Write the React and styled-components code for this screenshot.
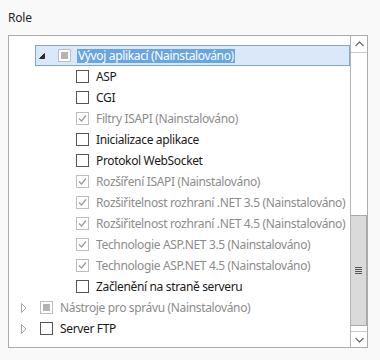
import React from "react";
import styled, { createGlobalStyle } from "styled-components";

const items = [
  { level: 1, label: "Vývoj aplikací (Nainstalováno)", state: "mixed", disabled: true, expander: "open", selected: true },
  { level: 2, label: "ASP", state: "off" },
  { level: 2, label: "CGI", state: "off" },
  { level: 2, label: "Filtry ISAPI (Nainstalováno)", state: "on", disabled: true },
  { level: 2, label: "Inicializace aplikace", state: "off" },
  { level: 2, label: "Protokol WebSocket", state: "off" },
  { level: 2, label: "Rozšíření ISAPI (Nainstalováno)", state: "on", disabled: true },
  { level: 2, label: "Rozšiřitelnost rozhraní .NET 3.5 (Nainstalováno)", state: "on", disabled: true },
  { level: 2, label: "Rozšiřitelnost rozhraní .NET 4.5 (Nainstalováno)", state: "on", disabled: true },
  { level: 2, label: "Technologie ASP.NET 3.5 (Nainstalováno)", state: "on", disabled: true },
  { level: 2, label: "Technologie ASP.NET 4.5 (Nainstalováno)", state: "on", disabled: true },
  { level: 2, label: "Začlenění na straně serveru", state: "off" },
  { level: 0, label: "Nástroje pro správu (Nainstalováno)", state: "mixed", disabled: true, expander: "closed" },
  { level: 0, label: "Server FTP", state: "off", expander: "closed" },
];

function Expander({ kind }) {
  if (kind === "open") {
    return (
      <ExpanderCell>
        <svg width="8" height="8" viewBox="0 0 8 8">
          <path d="M6.5 1.5 L6.5 6.5 L1.5 6.5 Z" fill="#2b2b2b" stroke="#2b2b2b" strokeWidth="1" />
        </svg>
      </ExpanderCell>
    );
  }
  if (kind === "closed") {
    return (
      <ExpanderCell>
        <svg width="8" height="10" viewBox="0 0 8 10">
          <path d="M1.5 0.5 L6 5 L1.5 9.5 Z" fill="none" stroke="#a6a6a6" strokeWidth="1" />
        </svg>
      </ExpanderCell>
    );
  }
  return <ExpanderCell />;
}

function Check({ state, disabled }) {
  return (
    <Box $disabled={disabled}>
      {state === "on" && (
        <svg width="11" height="11" viewBox="0 0 11 11">
          <path d="M2 5.5 L4.5 8 L9 2.5" fill="none" stroke="#9c9c9c" strokeWidth="1.3" />
        </svg>
      )}
      {state === "mixed" && <Mixed />}
    </Box>
  );
}

export default function App() {
  return (
    <>
      <GlobalStyle />
      <Page>
        <Title>Role</Title>
        <Panel>
          <List>
            {items.map((it) => (
              <Row key={it.label} $level={it.level} $selected={it.selected}>
                <Expander kind={it.expander} />
                <Check state={it.state} disabled={it.disabled} />
                <Label $disabled={it.disabled && !it.selected} $selected={it.selected}>
                  {it.label}
                </Label>
              </Row>
            ))}
          </List>
          <Scrollbar>
            <ScrollButton $top>
              <svg width="9" height="6" viewBox="0 0 9 6">
                <path d="M0.5 5 L4.5 1 L8.5 5" fill="none" stroke="#606060" strokeWidth="1.1" />
              </svg>
            </ScrollButton>
            <Track>
              <Thumb>
                <svg width="7" height="7" viewBox="0 0 7 7">
                  <rect x="0" y="0" width="7" height="1" fill="#555" />
                  <rect x="0" y="2" width="7" height="1" fill="#555" />
                  <rect x="0" y="4" width="7" height="1" fill="#555" />
                  <rect x="0" y="6" width="7" height="1" fill="#555" />
                </svg>
              </Thumb>
            </Track>
            <ScrollButton>
              <svg width="9" height="6" viewBox="0 0 9 6">
                <path d="M0.5 1 L4.5 5 L8.5 1" fill="none" stroke="#606060" strokeWidth="1.1" />
              </svg>
            </ScrollButton>
          </Scrollbar>
        </Panel>
      </Page>
    </>
  );
}

const GlobalStyle = createGlobalStyle`
  html, body {
    margin: 0;
    padding: 0;
    background: #f9f9f9;
  }
  body {
    font-family: "Noto Sans", "Open Sans", sans-serif;
    font-size: 12px;
  }
`;

const Page = styled.div`
  width: 380px;
  height: 360px;
`;

const Title = styled.div`
  height: 35px;
  box-sizing: border-box;
  padding: 10px 0 0 8px;
  line-height: 16px;
  font-size: 12px;
  color: #1f1f1f;
  letter-spacing: -0.2px;
`;

const Panel = styled.div`
  margin-left: 8px;
  width: 360px;
  height: 313px;
  box-sizing: border-box;
  border: 1px solid #ababab;
  background: #fff;
  display: flex;
  overflow: hidden;
`;

const List = styled.div`
  flex: 1;
  padding-top: 9px;
  overflow: hidden;
`;

const Row = styled.div`
  height: 21px;
  box-sizing: border-box;
  margin-left: ${(p) => 8 + p.$level * 18}px;
  display: flex;
  align-items: center;
  border: 1px solid ${(p) => (p.$selected ? "#7fa6d6" : "transparent")};
  background: ${(p) => (p.$selected ? "#dbe8f9" : "transparent")};
  white-space: nowrap;
`;

const ExpanderCell = styled.div`
  width: 22px;
  flex: none;
  display: flex;
  align-items: center;
  padding-left: 2px;
  box-sizing: border-box;
`;

const Box = styled.div`
  width: 13px;
  height: 13px;
  flex: none;
  box-sizing: border-box;
  margin-right: 7px;
  border: 1px solid ${(p) => (p.$disabled ? "#bdbdbd" : "#555")};
  background: #fff;
  display: flex;
  align-items: center;
  justify-content: center;
`;

const Mixed = styled.div`
  width: 7px;
  height: 7px;
  background: #b3b3b3;
`;

const Label = styled.span`
  font-size: 12px;
  line-height: 14px;
  letter-spacing: -0.35px;
  padding: 0 1px;
  margin-left: -1px;
  color: ${(p) => (p.$selected ? "#fff" : p.$disabled ? "#8c8c8c" : "#1a1a1a")};
  background: ${(p) => (p.$selected ? "#69a5e1" : "transparent")};
`;

const Scrollbar = styled.div`
  width: 17px;
  flex: none;
  box-sizing: border-box;
  border-left: 1px solid #b5b5b5;
  display: flex;
  flex-direction: column;
`;

const ScrollButton = styled.div`
  height: ${(p) => (p.$top ? "17px" : "16px")};
  box-sizing: border-box;
  border-bottom: ${(p) => (p.$top ? "1px solid #c8c8c8" : "none")};
  border-top: ${(p) => (p.$top ? "none" : "1px solid #c8c8c8")};
  display: flex;
  align-items: center;
  justify-content: center;
`;

const Track = styled.div`
  flex: 1;
  padding-top: 162px;
`;

const Thumb = styled.div`
  height: 111px;
  box-sizing: border-box;
  border-top: 1px solid #a9a9a9;
  border-bottom: 1px solid #a9a9a9;
  border-right: 1px solid #a9a9a9;
  background: #dadada;
  display: flex;
  align-items: center;
  justify-content: center;
`;
